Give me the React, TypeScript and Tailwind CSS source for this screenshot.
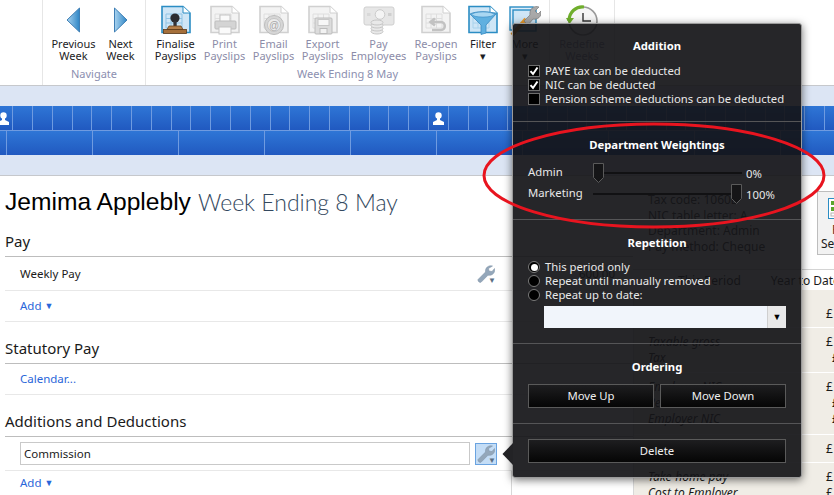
const uiFont = "font-['Noto_Sans',sans-serif]"

// ribbon icons
function Page({ stroke, fill, line }: { stroke: string; fill: string; line: string }) {
  return (
    <>
      <path d="M2 1.5H23L30 8V27.5H2Z" fill={fill} stroke={stroke} strokeWidth="1.6" />
      <path d="M23 1.5V8H30" fill="#ffffff" stroke={stroke} strokeWidth="1" />
      <path d="M6 9H22V23H6ZM6 13.5H22M6 18H22M11 9V23M16.5 9V23" fill="none" stroke={line} strokeWidth="1" />
    </>
  )
}

function Arrow({ dir }: { dir: 'left' | 'right' }) {
  const d = dir === 'left' ? 'M13.5 1V25L1 13Z' : 'M1.5 1V25L14 13Z'
  return (
    <svg width="15" height="26" viewBox="0 0 15 26">
      <defs>
        <linearGradient id={`arrow-${dir}`} x1="0" y1="0" x2="1" y2="0">
          <stop offset="0" stopColor="#a9d3ef" />
          <stop offset="1" stopColor="#2f86c6" />
        </linearGradient>
      </defs>
      <path d={d} fill={`url(#arrow-${dir})`} stroke="#3f7fb5" strokeWidth="1" />
    </svg>
  )
}

function FinaliseIcon() {
  return (
    <svg width="32" height="30" viewBox="0 0 32 30">
      <Page stroke="#2b8dc4" fill="#cfe6f6" line="#8fc3e4" />
      <circle cx="15" cy="13" r="4.6" fill="#2c2c30" />
      <rect x="13.4" y="16" width="3.2" height="5" fill="#333338" />
      <path d="M9 21H21L23 24.5H7Z" fill="#b5804a" stroke="#6d4520" strokeWidth="0.8" />
      <rect x="3.5" y="24.5" width="23" height="4" fill="#a56f3a" stroke="#5b3a1a" strokeWidth="0.8" />
    </svg>
  )
}

function GreyIcon({ kind }: { kind: 'print' | 'email' | 'export' | 'reopen' }) {
  return (
    <svg width="32" height="30" viewBox="0 0 32 30">
      <Page stroke="#d0d0d0" fill="#f3f3f3" line="#dedede" />
      {kind === 'print' && (
        <>
          <rect x="11" y="10" width="10" height="7" fill="#fafafa" stroke="#c4c4c4" />
          <rect x="6" y="16" width="21" height="8" rx="1" fill="#d4d4d4" stroke="#bdbdbd" />
          <rect x="10" y="22" width="12" height="7" fill="#fafafa" stroke="#c4c4c4" />
        </>
      )}
      {kind === 'email' && (
        <>
          <circle cx="16" cy="20" r="9.5" fill="#d6d6d6" stroke="#bcbcbc" />
          <circle cx="16" cy="20" r="6.5" fill="#ececec" stroke="#c4c4c4" />
          <text x="16" y="23.5" textAnchor="middle" fontSize="10" fill="#a8a8a8" fontFamily="Liberation Sans">@</text>
        </>
      )}
      {kind === 'export' && (
        <>
          <rect x="8" y="13" width="17" height="16" rx="1" fill="#dcdcdc" stroke="#bcbcbc" />
          <rect x="11" y="14.5" width="11" height="6" fill="#f7f7f7" stroke="#c8c8c8" />
          <rect x="13" y="23.5" width="7" height="5" fill="#f2f2f2" stroke="#bcbcbc" />
        </>
      )}
      {kind === 'reopen' && (
        <path d="M12 17H21C26 17 26 25 21 25H12M15 13.5L10.5 17L15 20.5" fill="none" stroke="#c2c2c2" strokeWidth="2.6" />
      )}
    </svg>
  )
}

function PayIcon() {
  return (
    <svg width="32" height="30" viewBox="0 0 32 30">
      <rect x="1" y="2" width="30" height="18" rx="2" fill="#e6e6e6" stroke="#cfcfcf" />
      <circle cx="17" cy="9.5" r="4.8" fill="#f4f4f4" stroke="#cbcbcb" />
      <rect x="25" y="8" width="3.5" height="3" fill="#cfcfcf" />
      <rect x="4" y="8" width="3.5" height="3" fill="#d8d8d8" />
      <g fill="#e9e9e9" stroke="#c6c6c6">
        <ellipse cx="14" cy="26.5" rx="6" ry="2.5" />
        <ellipse cx="14" cy="23.5" rx="6" ry="2.5" />
        <ellipse cx="14" cy="20.5" rx="6" ry="2.5" />
        <ellipse cx="14" cy="17.5" rx="6" ry="2.5" />
      </g>
    </svg>
  )
}

function FilterIcon() {
  return (
    <svg width="32" height="30" viewBox="0 0 32 30">
      <Page stroke="#2b8dc4" fill="#cfe6f6" line="#a8d2ec" />
      <path d="M3 9C8 6 24 6 29 9L19 20V28L14 29.5V20Z" fill="#5fb0e0" stroke="#3a8bc2" strokeWidth="0.8" />
      <ellipse cx="16" cy="9.5" rx="11" ry="2.6" fill="#a9d7f2" stroke="#3a8bc2" strokeWidth="0.6" />
    </svg>
  )
}

function MoreIcon() {
  return (
    <svg width="32" height="32" viewBox="0 0 32 32">
      <rect x="1" y="3" width="23" height="23" fill="#dfeefa" stroke="#2b8dc4" strokeWidth="1.4" />
      <rect x="4" y="6" width="23" height="21" fill="#cfe6f6" stroke="#2b8dc4" strokeWidth="1.4" />
      <path d="M3 31L17 15" stroke="#e89a2c" strokeWidth="4" />
      <path d="M15 17L21 11C20 5 25 1 30 3L26 7L29 10L32 7C33 13 28 16 24 15L19 21Z" fill="#a9a9a9" stroke="#7d7d7d" strokeWidth="0.7" />
    </svg>
  )
}

function ClockIcon() {
  return (
    <svg width="32" height="32" viewBox="0 0 32 32">
      <circle cx="17" cy="17" r="14" fill="#f5f5f5" stroke="#9a9a9a" strokeWidth="1.6" />
      <path d="M17 9V17H25" fill="none" stroke="#333333" strokeWidth="1.4" />
      <path d="M3 17C3 8 10 2 18 3" fill="none" stroke="#6fae2c" strokeWidth="3.2" />
      <path d="M0 14L3.5 20L8 14Z" fill="#6fae2c" />
    </svg>
  )
}

function PersonIcon() {
  return (
    <svg width="11" height="13" viewBox="0 0 11 13">
      <circle cx="5.5" cy="3.5" r="3.2" fill="#ffffff" />
      <path d="M4 6H7V8L11 10V13H0V10L4 8Z" fill="#ffffff" />
    </svg>
  )
}

const navButtons = [
  { top: 'Previous', bottom: 'Week', icon: <Arrow dir="left" /> },
  { top: 'Next', bottom: 'Week', icon: <Arrow dir="right" /> },
]

const payButtons = [
  { top: 'Finalise', bottom: 'Payslips', w: 'w-[49px]', on: true, icon: <FinaliseIcon /> },
  { top: 'Print', bottom: 'Payslips', w: 'w-[49px]', on: false, icon: <GreyIcon kind="print" /> },
  { top: 'Email', bottom: 'Payslips', w: 'w-[49px]', on: false, icon: <GreyIcon kind="email" /> },
  { top: 'Export', bottom: 'Payslips', w: 'w-[49px]', on: false, icon: <GreyIcon kind="export" /> },
  { top: 'Pay', bottom: 'Employees', w: 'w-[63px]', on: false, icon: <PayIcon /> },
  { top: 'Re-open', bottom: 'Payslips', w: 'w-[52px]', on: false, icon: <GreyIcon kind="reopen" /> },
  { top: 'Filter', bottom: '▾', w: 'w-[42px]', on: true, icon: <FilterIcon /> },
  { top: 'More', bottom: '▾', w: 'w-[42px]', on: true, icon: <MoreIcon /> },
]

function RibbonButton({ top, bottom, on, icon, className }: {
  top: string; bottom: string; on: boolean; icon: React.ReactNode; className: string
}) {
  return (
    <div className={`${className} flex flex-col items-center shrink-0`}>
      <div className="h-[32px] flex items-center justify-center">{icon}</div>
      <div className={`mt-[2px] text-[11px] leading-[12px] text-center whitespace-nowrap ${on ? 'text-[#1c1c24]' : 'text-[#8c8ca8]'}`}>
        {top}
        <br />
        {bottom}
      </div>
    </div>
  )
}

function Ribbon() {
  return (
    <div className="h-[86px] flex border-b border-[#c6c8cc] bg-white shrink-0">
      <div className="w-[43px] border-r border-[#e6e6e6] shrink-0" />
      <div className="w-[103px] border-r border-[#e6e6e6] shrink-0 flex flex-col pt-[4px]">
        <div className="flex pl-[7px] h-[63px]">
          {navButtons.map(b => (
            <RibbonButton key={b.top} {...b} on className="w-[47px]" />
          ))}
        </div>
        <div className="text-[11px] leading-[14px] text-center text-[#8c8fb0]">Navigate</div>
      </div>
      <div className="w-[404px] border-r border-[#e6e6e6] shrink-0 flex flex-col pt-[4px]">
        <div className="flex pl-[5px] h-[63px]">
          {payButtons.map(b => (
            <RibbonButton key={b.top} {...b} className={b.w} />
          ))}
        </div>
        <div className="text-[11px] leading-[14px] text-center text-[#8c8fb0]">Week Ending 8 May</div>
      </div>
      <div className="w-[65px] border-r border-[#e6e6e6] shrink-0 pt-[4px]">
        <RibbonButton top="Redefine" bottom="Weeks" on={false} icon={<ClockIcon />} className="w-full" />
      </div>
    </div>
  )
}

function Timeline() {
  const topCells = Array.from({ length: 42 }, (_, i) => i)
  const bottomCells = Array.from({ length: 10 }, (_, i) => i)
  return (
    <div className="h-[90px] bg-[#dce5f4] border-b border-[#c6c8cc] pt-[20px] shrink-0 overflow-hidden">
      <div className="h-[25px] flex bg-gradient-to-b from-[#2f76d6] to-[#2159c0] border-b border-[#6f9be0]">
        <div className="w-[13.3px] shrink-0 border-r border-[#6f9be0] flex items-center">
          <span className="-ml-[2px] flex"><PersonIcon /></span>
        </div>
        {topCells.map(i => (
          <div key={i} className="w-[19.8px] shrink-0 border-r border-[#6f9be0] flex items-center justify-center">
            {i === 21 && <PersonIcon />}
          </div>
        ))}
      </div>
      <div className="h-[24px] flex bg-gradient-to-b from-[#2f76d6] to-[#2159c0]">
        <div className="w-[6.5px] shrink-0 border-r border-[#6f9be0]" />
        {bottomCells.map(i => (
          <div key={i} className="w-[86px] shrink-0 border-r border-[#6f9be0]" />
        ))}
      </div>
    </div>
  )
}

function Spanner() {
  return (
    <span className="relative w-[18px] h-[18px] inline-flex shrink-0">
      <svg width="18" height="18" viewBox="0 0 18 18">
        <path
          d="M1 14.5L8.5 7C8 3 11 0 15.5 1L11.5 3.5L12 6L15 6.5L17.5 3.5C18.5 8 15 11 11 10.2L4 17.3C2.5 18 0.5 16 1 14.5Z"
          fill="#94a7ba"
          stroke="#7d90a5"
          strokeWidth="0.5"
        />
      </svg>
      <span className="absolute right-[-1px] bottom-[-1px] text-[8px] leading-none text-[#5c6f85]">▼</span>
    </span>
  )
}

function Heading({ children, className }: { children: React.ReactNode; className: string }) {
  return (
    <div className={`${className} flex items-end pb-[4px] text-[15px] leading-[22px] text-[#1a1a1a] border-b border-[#bdbdbd]`}>
      {children}
    </div>
  )
}

function LeftColumn() {
  return (
    <div className="w-[633px] shrink-0 pl-[5px] flex flex-col">
      <div className="h-[50px] flex items-center pt-[2px] text-[24.6px] leading-[30px] font-['Liberation_Sans',sans-serif] whitespace-nowrap">
        <span className="text-black">Jemima Applebly</span>
        <span className="ml-[7px] font-['Lato',sans-serif] text-[23px] font-light text-[#33485e]">Week Ending 8 May</span>
      </div>

      <Heading className="h-[31px]">Pay</Heading>
      <div className="h-[34px] flex items-center pl-[15px] border-b border-[#e8e8e8] text-[11.5px] text-[#1a1a1a]">
        <span className="w-[457px]">Weekly Pay</span>
        <Spanner />
        <span className="ml-[84px]">600.00</span>
      </div>
      <div className="h-[31px] flex items-center pl-[15px] border-b border-[#e8e8e8] text-[11.5px] text-[#2a66d9]">
        Add&nbsp;<span className="text-[9px]">▼</span>
      </div>

      <Heading className="h-[42px]">Statutory Pay</Heading>
      <div className="h-[31px] flex items-center pl-[15px] border-b border-[#e8e8e8] text-[11.5px] text-[#2a66d9]">
        Calendar...
      </div>

      <Heading className="h-[42px]">Additions and Deductions</Heading>
      <div className="h-[34px] flex items-center pl-[15px] border-b border-[#e8e8e8]">
        <div className="w-[450px] h-[23px] border border-[#c9c9c9] flex items-center px-[3px] text-[11.5px] text-[#1a1a1a]">
          Commission
        </div>
        <div className="ml-[5px] w-[22px] h-[22px] border border-[#6aa3e0] bg-[#c4ddf6] flex items-center justify-center">
          <Spanner />
        </div>
      </div>
      <div className="flex-1 w-[507px] flex items-center pl-[15px] border-r border-[#d8d8d8] text-[11.5px] text-[#2a66d9]">
        Add&nbsp;<span className="text-[9px]">▼</span>
      </div>
    </div>
  )
}

const payRows = [
  { pt: 'pt-[16px]', h: 'h-[38px]', rows: [['Gross pay', false]] },
  { pt: 'pt-[6px]', h: 'h-[45px]', rows: [['Taxable gross', false], ['Tax', true]] },
  { pt: 'pt-[6px]', h: 'h-[62px]', rows: [['Employee NIC', false], ['Pension', true], ['Employer NIC', true]] },
  { pt: 'pt-[6px]', h: 'h-[28px]', rows: [['Net pay', false]] },
  { pt: 'pt-[6px]', h: 'h-[36px]', rows: [['Take-home pay', false], ['Cost to Employer', false]] },
] as const

function RightColumn() {
  return (
    <div className="flex-1 min-w-0 flex flex-col text-[12px] text-[#1a1a1a]">
      <div className="h-[94px] shrink-0 flex items-start pt-[16px] pl-[15px] border-b border-[#d4d4d4] whitespace-nowrap">
        <div className="w-[169px] shrink-0 leading-[15.5px] text-[#333333]">
          Tax code: 1060L
          <br />
          NIC table letter: A
          <br />
          Department: Admin
          <br />
          Pay method: Cheque
        </div>
        <div className="w-[60px] h-[64px] -mt-[1px] shrink-0 bg-[#f2f2f2] border border-[#bdbdbd] flex flex-col pl-[3px] pt-[6px]">
          <svg width="14" height="26" viewBox="0 0 14 26" className="ml-[7px]">
            <rect x="0.5" y="0.5" width="20" height="20" fill="#ffffff" stroke="#2b8dc4" />
            <rect x="3" y="3" width="6" height="4" fill="#5aa52c" />
            <rect x="3" y="9" width="6" height="4" fill="#5aa52c" />
            <rect x="3" y="15" width="6" height="3" fill="none" stroke="#b5b5b5" />
          </svg>
          <span className="leading-[14px] pl-[11px] -mt-[1px] text-[#5a2a1a]">Payslip</span>
          <span className="leading-[14px]">Settings</span>
        </div>
      </div>
      <div className="h-[20px] shrink-0 flex items-center pt-[2px] pl-[45px] gap-[30px] whitespace-nowrap">
        <span>This Period</span>
        <span>Year to Date</span>
      </div>
      <div className="flex-1 min-h-0 overflow-hidden bg-[#f0ede6] border-l border-[#d8d8d8]">
        {payRows.map((group, g) => (
          <div key={g} className={`${group.h} ${group.pt} border-b border-[#ffffff]`}>
            {group.rows.map(([label, indent]) => (
              <div key={label} className="flex justify-between leading-[16px] whitespace-nowrap">
                <span className="pl-[14px] italic">{label}</span>
                <span className={indent ? 'w-[2px]' : 'w-[8px]'}>£</span>
              </div>
            ))}
          </div>
        ))}
      </div>
    </div>
  )
}

function PopupTitle({ children }: { children: React.ReactNode }) {
  return <div className="text-center text-[11.3px] leading-[16px] font-bold text-white">{children}</div>
}

function Check({ label, checked }: { label: string; checked: boolean }) {
  return (
    <div className="h-[14px] flex items-center gap-[5px] whitespace-nowrap">
      <span className="w-[12px] h-[12px] shrink-0 bg-black border border-[#6e6e6e] flex items-center justify-center">
        {checked && (
          <svg width="10" height="10" viewBox="0 0 10 10">
            <path d="M1.5 5.2L4 8L8.5 1.5" fill="none" stroke="#ffffff" strokeWidth="2" />
          </svg>
        )}
      </span>
      {label}
    </div>
  )
}

function Radio({ label, checked }: { label: string; checked: boolean }) {
  return (
    <div className="h-[14px] flex items-center gap-[5px] whitespace-nowrap">
      <span className="w-[12px] h-[12px] shrink-0 rounded-full bg-black border border-[#7a7a7a] flex items-center justify-center">
        {checked && <span className="w-[7px] h-[7px] rounded-full bg-white" />}
      </span>
      {label}
    </div>
  )
}

function Slider({ label, value, atEnd }: { label: string; value: string; atEnd: boolean }) {
  return (
    <div className="h-[21px] flex items-center whitespace-nowrap">
      <span className="w-[65px] -mt-[2px] shrink-0">{label}</span>
      <div className="relative w-[149px] h-[2px] bg-[#111113] shrink-0">
        <svg
          width="11"
          height="20"
          viewBox="0 0 11 20"
          className={`absolute -top-[9px] ${atEnd ? 'right-0' : 'left-0'}`}
        >
          <path d="M0.5 0.5H10.5V14.5L5.5 19.5L0.5 14.5Z" fill="#151517" stroke="#5a5a5a" />
        </svg>
      </div>
      <span className="ml-[4px] mt-[2px]">{value}</span>
    </div>
  )
}

function DarkButton({ children, className }: { children: React.ReactNode; className: string }) {
  return (
    <div className={`${className} h-[24px] border border-[#5a5a5a] bg-gradient-to-b from-[#1e1e20] to-[#060606] flex items-center justify-center text-[#eeeeee]`}>
      {children}
    </div>
  )
}

function Popup() {
  return (
    <div className="absolute left-[512px] top-[23px] w-[290px] h-[455px] rounded-[3px] border border-[#9a9a9a] bg-[#141417]/92 shadow-[0_2px_8px_rgba(0,0,0,0.55)] text-[11.3px] leading-[14px] text-[#e8e8e8] flex flex-col">
      <svg width="11" height="22" viewBox="0 0 11 22" className="absolute -left-[11px] top-[419px]">
        <path d="M11 0L0.5 11L11 22Z" fill="#232326" />
      </svg>

      <div className="h-[98px] border-b border-[#555557] px-[15px] pt-[14px] shrink-0">
        <PopupTitle>Addition</PopupTitle>
        <div className="mt-[10px]">
          <Check label="PAYE tax can be deducted" checked />
          <Check label="NIC can be deducted" checked />
          <Check label="Pension scheme deductions can be deducted" checked={false} />
        </div>
      </div>

      <div className="h-[98px] border-b border-[#555557] px-[15px] pt-[15px] shrink-0">
        <PopupTitle>Department Weightings</PopupTitle>
        <div className="mt-[9px]">
          <Slider label="Admin" value="0%" atEnd={false} />
          <Slider label="Marketing" value="100%" atEnd />
        </div>
      </div>

      <div className="h-[124px] border-b border-[#555557] px-[15px] pt-[15px] shrink-0">
        <PopupTitle>Repetition</PopupTitle>
        <div className="mt-[9px]">
          <Radio label="This period only" checked />
          <Radio label="Repeat until manually removed" checked={false} />
          <Radio label="Repeat up to date:" checked={false} />
        </div>
        <div className="ml-[16px] mt-[4px] h-[22px] bg-[#f1f5fb] flex justify-end">
          <div className="w-[19px] bg-[#e9e9e9] border-l border-[#cfcfcf] flex items-center justify-center text-[9px] text-black">
            ▼
          </div>
        </div>
      </div>

      <div className="h-[80px] border-b border-[#555557] px-[15px] pt-[15px] shrink-0">
        <PopupTitle>Ordering</PopupTitle>
        <div className="mt-[9px] flex gap-[6px]">
          <DarkButton className="flex-1">Move Up</DarkButton>
          <DarkButton className="flex-1">Move Down</DarkButton>
        </div>
      </div>

      <div className="flex-1 px-[15px] pt-[15px]">
        <DarkButton className="w-full">Delete</DarkButton>
      </div>
    </div>
  )
}

export default function App() {
  return (
    <div className={`${uiFont} relative w-[834px] h-[495px] overflow-hidden bg-white flex flex-col`}>
      <Ribbon />
      <Timeline />
      <div className="flex-1 min-h-0 flex">
        <LeftColumn />
        <RightColumn />
      </div>
      <Popup />
      {/* hand drawn annotation */}
      <svg width="834" height="495" className="absolute left-0 top-0 pointer-events-none">
        <ellipse cx="654" cy="175.5" rx="170" ry="51.5" fill="none" stroke="#e8141f" strokeWidth="3" />
      </svg>
    </div>
  )
}
